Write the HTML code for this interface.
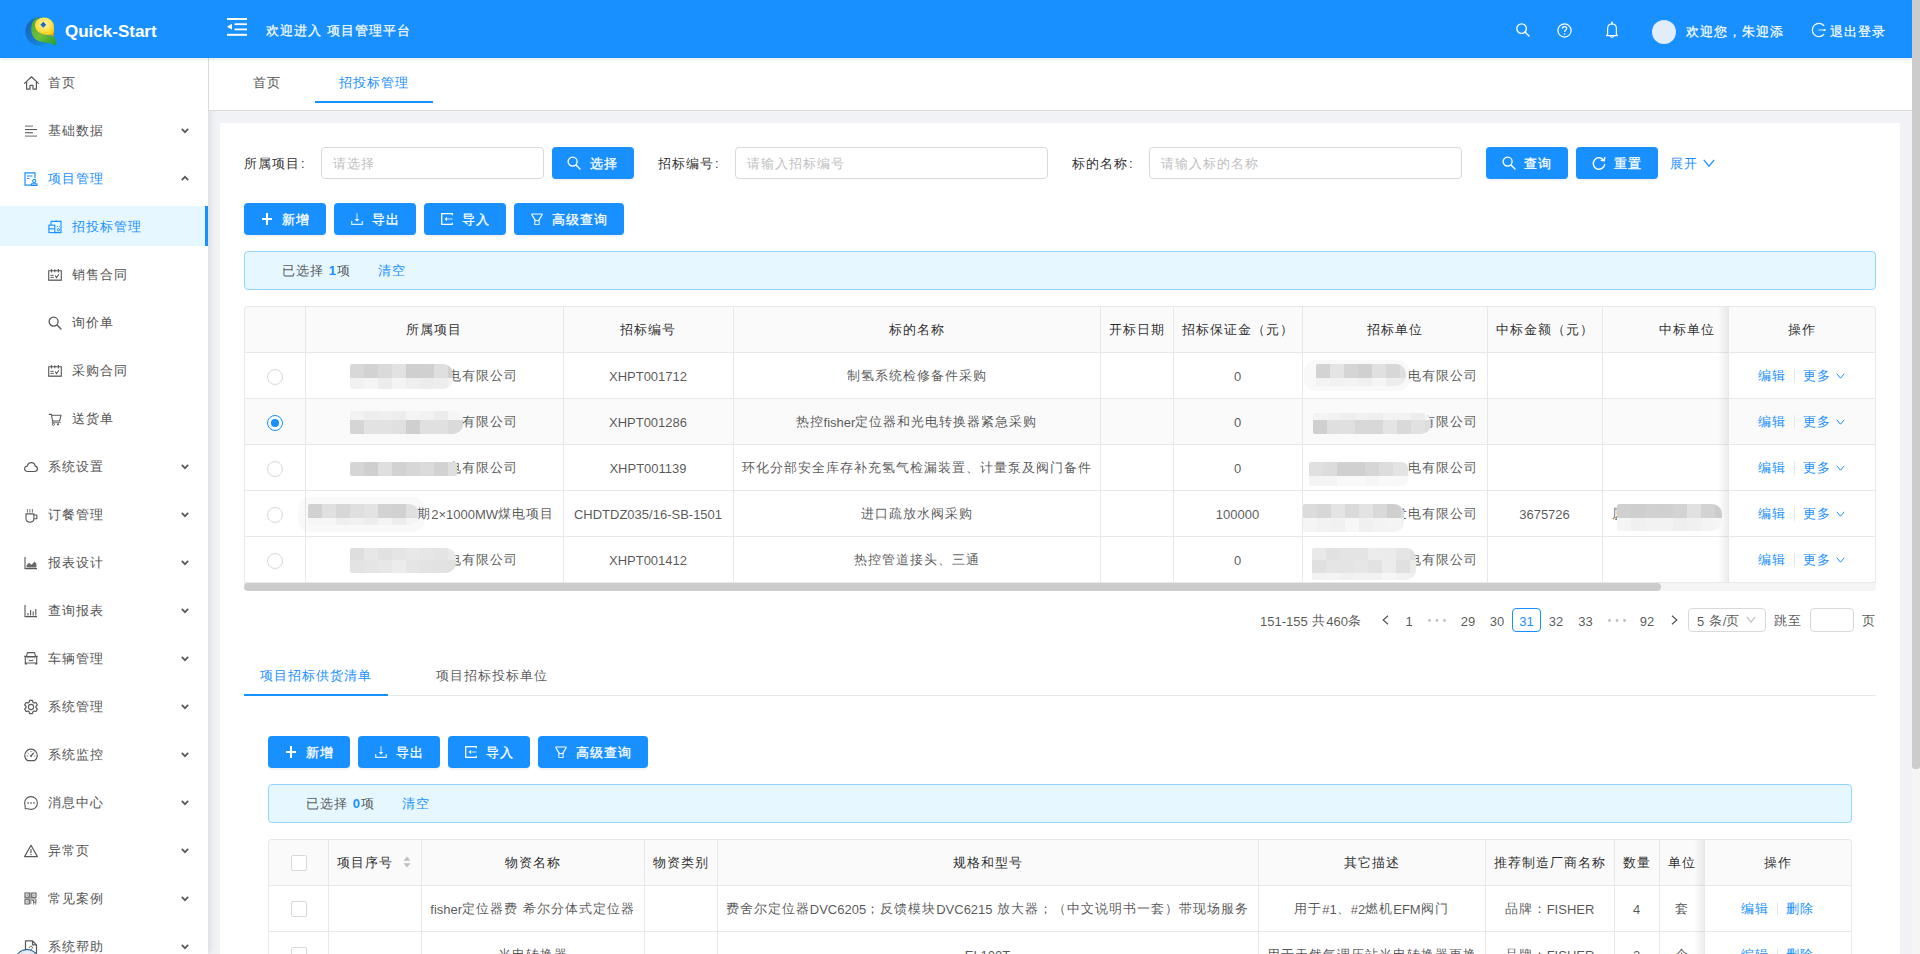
<!DOCTYPE html><html><head><meta charset="utf-8"><style>
*{box-sizing:border-box;margin:0;padding:0}
html,body{width:1920px;height:954px;overflow:hidden;background:#f0f2f5;font-family:"Liberation Sans",sans-serif;font-size:13px;letter-spacing:1px;color:rgba(0,0,0,.68)}
.a{position:absolute}
.t{position:absolute;white-space:nowrap;line-height:20px;height:20px}
svg{position:absolute;overflow:visible}
.d{color:rgba(0,0,0,.85)}
.b{color:#1890ff}
.w{color:#fff}
.l{font-size:13px;letter-spacing:0;vertical-align:-1px}
</style></head><body><div class="a" style="left:220px;top:123px;width:1680px;height:840px;background:#fff"></div>
<div class="t " style="left:244px;top:154px;color:rgba(0,0,0,.85);">所属项目</div>
<div class="t " style="left:301px;top:154px;color:rgba(0,0,0,.85);">:</div>
<div class="a" style="left:321px;top:147px;width:223px;height:32px;background:#fff;border:1px solid #d9d9d9;border-radius:4px"></div>
<div class="t " style="left:333px;top:154px;color:#bfbfbf;">请选择</div>
<div class="a" style="left:552px;top:147px;width:82px;height:32px;background:#1890ff;border-radius:4px;box-shadow:0 2px 0 rgba(0,0,0,.045)"></div>
<svg style="left:567px;top:156px;" width="14" height="14" viewBox="0 0 14 14"><circle cx="5.6" cy="5.6" r="4.5" fill="none" stroke="#fff" stroke-width="1.3"/><path d="M9 9 L13 13" stroke="#fff" stroke-width="1.4" stroke-linecap="round"/></svg>
<div class="t " style="left:590px;top:154px;color:#fff;-webkit-text-stroke:.3px #fff">选择</div>
<div class="t " style="left:658px;top:154px;color:rgba(0,0,0,.85);">招标编号</div>
<div class="t " style="left:715px;top:154px;color:rgba(0,0,0,.85);">:</div>
<div class="a" style="left:735px;top:147px;width:313px;height:32px;background:#fff;border:1px solid #d9d9d9;border-radius:4px"></div>
<div class="t " style="left:747px;top:154px;color:#bfbfbf;">请输入招标编号</div>
<div class="t " style="left:1072px;top:154px;color:rgba(0,0,0,.85);">标的名称</div>
<div class="t " style="left:1129px;top:154px;color:rgba(0,0,0,.85);">:</div>
<div class="a" style="left:1149px;top:147px;width:313px;height:32px;background:#fff;border:1px solid #d9d9d9;border-radius:4px"></div>
<div class="t " style="left:1161px;top:154px;color:#bfbfbf;">请输入标的名称</div>
<div class="a" style="left:1486px;top:147px;width:82px;height:32px;background:#1890ff;border-radius:4px;box-shadow:0 2px 0 rgba(0,0,0,.045)"></div>
<svg style="left:1502px;top:156px;" width="14" height="14" viewBox="0 0 14 14"><circle cx="5.6" cy="5.6" r="4.5" fill="none" stroke="#fff" stroke-width="1.3"/><path d="M9 9 L13 13" stroke="#fff" stroke-width="1.4" stroke-linecap="round"/></svg>
<div class="t " style="left:1524px;top:154px;color:#fff;-webkit-text-stroke:.3px #fff">查询</div>
<div class="a" style="left:1576px;top:147px;width:82px;height:32px;background:#1890ff;border-radius:4px;box-shadow:0 2px 0 rgba(0,0,0,.045)"></div>
<svg style="left:1592px;top:156px;" width="14" height="14" viewBox="0 0 14 14"><path d="M12 4.5 A5.8 5.8 0 1 0 12.8 8" fill="none" stroke="#fff" stroke-width="1.4"/><path d="M12.8 1.2 L12.3 4.8 L8.8 4.3" fill="none" stroke="#fff" stroke-width="1.4"/></svg>
<div class="t " style="left:1614px;top:154px;color:#fff;-webkit-text-stroke:.3px #fff">重置</div>
<div class="t " style="left:1670px;top:154px;color:#1890ff;">展开</div>
<svg style="left:1703px;top:158.5px;" width="12" height="8" viewBox="0 0 12 8"><path d="M0.8 0.8 L6.0 7.2 L11.2 0.8" fill="none" stroke="#1890ff" stroke-width="1.2"/></svg>
<div class="a" style="left:244px;top:203px;width:82px;height:32px;background:#1890ff;border-radius:4px;box-shadow:0 2px 0 rgba(0,0,0,.045)"></div>
<svg style="left:262px;top:213px;" width="10" height="12" viewBox="0 0 10 12"><rect x="4" y="0" width="2" height="12" fill="#fff"/><rect x="0" y="5" width="10" height="2" fill="#fff"/></svg>
<div class="t " style="left:282px;top:210px;color:#fff;-webkit-text-stroke:.3px #fff">新增</div>
<div class="a" style="left:334px;top:203px;width:82px;height:32px;background:#1890ff;border-radius:4px;box-shadow:0 2px 0 rgba(0,0,0,.045)"></div>
<svg style="left:351px;top:213px;" width="12" height="12" viewBox="0 0 12 12"><path d="M6 0.3 L6 7" stroke="#fff" stroke-width="1.1" opacity=".75"/><path d="M3.6 6.2 L6 8.6 L8.4 6.2 Z" fill="#fff"/><path d="M0.7 8 L0.7 11.3 L11.3 11.3 L11.3 8" fill="none" stroke="#fff" stroke-width="1.2" opacity=".85"/></svg>
<div class="t " style="left:372px;top:210px;color:#fff;-webkit-text-stroke:.3px #fff">导出</div>
<div class="a" style="left:424px;top:203px;width:82px;height:32px;background:#1890ff;border-radius:4px;box-shadow:0 2px 0 rgba(0,0,0,.045)"></div>
<svg style="left:441px;top:213px;" width="12" height="12" viewBox="0 0 12 12"><path d="M11.3 2.3 L11.3 0.7 L0.7 0.7 L0.7 11.3 L11.3 11.3 L11.3 9.7" fill="none" stroke="#fff" stroke-width="1.3"/><path d="M5.5 6 L11.5 6" stroke="#fff" stroke-width="1.1" opacity=".75"/><path d="M6 3.7 L3.7 6 L6 8.3 Z" fill="#fff"/></svg>
<div class="t " style="left:462px;top:210px;color:#fff;-webkit-text-stroke:.3px #fff">导入</div>
<div class="a" style="left:514px;top:203px;width:110px;height:32px;background:#1890ff;border-radius:4px;box-shadow:0 2px 0 rgba(0,0,0,.045)"></div>
<svg style="left:531px;top:213px;" width="12" height="12" viewBox="0 0 12 12"><path d="M0.5 1 L11.5 1" stroke="#fff" stroke-width="1.3" opacity=".75"/><path d="M0.6 1.2 L4.4 7.6 M11.4 1.2 L7.6 7.6" stroke="#fff" stroke-width="1.2"/><path d="M4 7.6 L8 7.6" stroke="#fff" stroke-width="1.1"/><path d="M3.8 7.6 L3.8 11.5 L8.2 11.5 L8.2 7.6" fill="none" stroke="#fff" stroke-width="1.2" opacity=".8"/></svg>
<div class="t " style="left:552px;top:210px;color:#fff;-webkit-text-stroke:.3px #fff">高级查询</div>
<div class="a" style="left:244px;top:251px;width:1632px;height:39px;background:#e6f7ff;border:1px solid #91d5ff;border-radius:4px"></div>
<div class="t" style="left:282px;top:261px">已选择 <span class="b" style="font-weight:bold">1</span>项</div>
<div class="t " style="left:378px;top:261px;color:#1890ff;">清空</div>
<div class="a" style="left:244px;top:306px;width:1632px;height:46px;background:#fafafa;border-radius:4px 4px 0 0"></div>
<div class="a" style="left:244px;top:398px;width:1632px;height:46px;background:#fafafa"></div>
<div class="a" style="left:244px;top:306px;width:1632px;height:276px;border:1px solid #e8e8e8;border-bottom:0;border-radius:4px 4px 0 0"></div>
<div class="a" style="left:244px;top:352px;width:1632px;height:1px;background:#e8e8e8"></div>
<div class="a" style="left:244px;top:398px;width:1632px;height:1px;background:#e8e8e8"></div>
<div class="a" style="left:244px;top:444px;width:1632px;height:1px;background:#e8e8e8"></div>
<div class="a" style="left:244px;top:490px;width:1632px;height:1px;background:#e8e8e8"></div>
<div class="a" style="left:244px;top:536px;width:1632px;height:1px;background:#e8e8e8"></div>
<div class="a" style="left:244px;top:582px;width:1632px;height:1px;background:#e8e8e8"></div>
<div class="a" style="left:305px;top:306px;width:1px;height:276px;background:#e8e8e8"></div>
<div class="a" style="left:563px;top:306px;width:1px;height:276px;background:#e8e8e8"></div>
<div class="a" style="left:733px;top:306px;width:1px;height:276px;background:#e8e8e8"></div>
<div class="a" style="left:1100px;top:306px;width:1px;height:276px;background:#e8e8e8"></div>
<div class="a" style="left:1173px;top:306px;width:1px;height:276px;background:#e8e8e8"></div>
<div class="a" style="left:1302px;top:306px;width:1px;height:276px;background:#e8e8e8"></div>
<div class="a" style="left:1487px;top:306px;width:1px;height:276px;background:#e8e8e8"></div>
<div class="a" style="left:1602px;top:306px;width:1px;height:276px;background:#e8e8e8"></div>
<div class="a" style="left:1718px;top:307px;width:10px;height:275px;background:linear-gradient(to right,rgba(0,0,0,0),rgba(0,0,0,.07))"></div>
<div class="a" style="left:1728px;top:307px;width:1px;height:275px;background:#e8e8e8"></div>
<div class="t " style="left:305px;width:258px;top:320px;text-align:center;color:rgba(0,0,0,.85);">所属项目</div>
<div class="t " style="left:563px;width:170px;top:320px;text-align:center;color:rgba(0,0,0,.85);">招标编号</div>
<div class="t " style="left:733px;width:367px;top:320px;text-align:center;color:rgba(0,0,0,.85);">标的名称</div>
<div class="t " style="left:1100px;width:73px;top:320px;text-align:center;color:rgba(0,0,0,.85);">开标日期</div>
<div class="t " style="left:1173px;width:129px;top:320px;text-align:center;color:rgba(0,0,0,.85);">招标保证金（元）</div>
<div class="t " style="left:1302px;width:185px;top:320px;text-align:center;color:rgba(0,0,0,.85);">招标单位</div>
<div class="t " style="left:1487px;width:115px;top:320px;text-align:center;color:rgba(0,0,0,.85);">中标金额（元）</div>
<div class="t " style="left:1602px;width:170px;top:320px;text-align:center;color:rgba(0,0,0,.85);">中标单位</div>
<div class="t " style="left:1728px;width:148px;top:320px;text-align:center;color:rgba(0,0,0,.85);">操作</div>
<div class="a" style="left:267px;top:369px;width:16px;height:16px;border:1px solid #d9d9d9;border-radius:50%;background:#fff"></div>
<div class="t" style="left:300px;width:218px;top:366px;text-align:right">电有限公司</div>
<div class="t " style="left:563px;width:170px;top:366px;text-align:center;"><span class="l">XHPT001712</span></div>
<div class="t " style="left:733px;width:367px;top:366px;text-align:center;">制氢系统检修备件采购</div>
<div class="t " style="left:1173px;width:129px;top:366px;text-align:center;"><span class="l">0</span></div>
<div class="t" style="left:1300px;width:178px;top:366px;text-align:right">电有限公司</div>
<div class="t " style="left:1758px;top:366px;color:#1890ff;">编辑</div>
<div class="a" style="left:1794px;top:369px;width:1px;height:14px;background:#e8e8e8"></div>
<div class="t " style="left:1803px;top:366px;color:#1890ff;">更多</div>
<svg style="left:1836px;top:373.0px;" width="9" height="6" viewBox="0 0 9 6"><path d="M0.8 0.8 L4.5 5.2 L8.2 0.8" fill="none" stroke="#1890ff" stroke-width="1.0"/></svg>
<div class="a" style="left:267px;top:415px;width:16px;height:16px;border:1px solid #1890ff;border-radius:50%;background:#fff"></div>
<div class="a" style="left:271px;top:419px;width:8px;height:8px;background:#1890ff;border-radius:50%"></div>
<div class="t" style="left:300px;width:218px;top:412px;text-align:right">有限公司</div>
<div class="t " style="left:563px;width:170px;top:412px;text-align:center;"><span class="l">XHPT001286</span></div>
<div class="t " style="left:733px;width:367px;top:412px;text-align:center;">热控<span class="l">fisher</span>定位器和光电转换器紧急采购</div>
<div class="t " style="left:1173px;width:129px;top:412px;text-align:center;"><span class="l">0</span></div>
<div class="t" style="left:1300px;width:178px;top:412px;text-align:right">有限公司</div>
<div class="t " style="left:1758px;top:412px;color:#1890ff;">编辑</div>
<div class="a" style="left:1794px;top:415px;width:1px;height:14px;background:#e8e8e8"></div>
<div class="t " style="left:1803px;top:412px;color:#1890ff;">更多</div>
<svg style="left:1836px;top:419.0px;" width="9" height="6" viewBox="0 0 9 6"><path d="M0.8 0.8 L4.5 5.2 L8.2 0.8" fill="none" stroke="#1890ff" stroke-width="1.0"/></svg>
<div class="a" style="left:267px;top:461px;width:16px;height:16px;border:1px solid #d9d9d9;border-radius:50%;background:#fff"></div>
<div class="t" style="left:300px;width:218px;top:458px;text-align:right">电有限公司</div>
<div class="t " style="left:563px;width:170px;top:458px;text-align:center;"><span class="l">XHPT001139</span></div>
<div class="t " style="left:733px;width:367px;top:458px;text-align:center;">环化分部安全库存补充氢气检漏装置、计量泵及阀门备件</div>
<div class="t " style="left:1173px;width:129px;top:458px;text-align:center;"><span class="l">0</span></div>
<div class="t" style="left:1300px;width:178px;top:458px;text-align:right">电有限公司</div>
<div class="t " style="left:1758px;top:458px;color:#1890ff;">编辑</div>
<div class="a" style="left:1794px;top:461px;width:1px;height:14px;background:#e8e8e8"></div>
<div class="t " style="left:1803px;top:458px;color:#1890ff;">更多</div>
<svg style="left:1836px;top:465.0px;" width="9" height="6" viewBox="0 0 9 6"><path d="M0.8 0.8 L4.5 5.2 L8.2 0.8" fill="none" stroke="#1890ff" stroke-width="1.0"/></svg>
<div class="a" style="left:267px;top:507px;width:16px;height:16px;border:1px solid #d9d9d9;border-radius:50%;background:#fff"></div>
<div class="t" style="left:300px;width:254px;top:504px;text-align:right">期<span class="l">2×1000MW</span>煤电项目</div>
<div class="t " style="left:563px;width:170px;top:504px;text-align:center;"><span class="l">CHDTDZ035/16-SB-1501</span></div>
<div class="t " style="left:733px;width:367px;top:504px;text-align:center;">进口疏放水阀采购</div>
<div class="t " style="left:1173px;width:129px;top:504px;text-align:center;"><span class="l">100000</span></div>
<div class="t" style="left:1300px;width:178px;top:504px;text-align:right">发电有限公司</div>
<div class="t " style="left:1487px;width:115px;top:504px;text-align:center;"><span class="l">3675726</span></div>
<div class="t " style="left:1612px;top:504px;">厦</div>
<div class="t " style="left:1758px;top:504px;color:#1890ff;">编辑</div>
<div class="a" style="left:1794px;top:507px;width:1px;height:14px;background:#e8e8e8"></div>
<div class="t " style="left:1803px;top:504px;color:#1890ff;">更多</div>
<svg style="left:1836px;top:511.0px;" width="9" height="6" viewBox="0 0 9 6"><path d="M0.8 0.8 L4.5 5.2 L8.2 0.8" fill="none" stroke="#1890ff" stroke-width="1.0"/></svg>
<div class="a" style="left:267px;top:553px;width:16px;height:16px;border:1px solid #d9d9d9;border-radius:50%;background:#fff"></div>
<div class="t" style="left:300px;width:218px;top:550px;text-align:right">电有限公司</div>
<div class="t " style="left:563px;width:170px;top:550px;text-align:center;"><span class="l">XHPT001412</span></div>
<div class="t " style="left:733px;width:367px;top:550px;text-align:center;">热控管道接头、三通</div>
<div class="t " style="left:1173px;width:129px;top:550px;text-align:center;"><span class="l">0</span></div>
<div class="t" style="left:1300px;width:178px;top:550px;text-align:right">电有限公司</div>
<div class="t " style="left:1758px;top:550px;color:#1890ff;">编辑</div>
<div class="a" style="left:1794px;top:553px;width:1px;height:14px;background:#e8e8e8"></div>
<div class="t " style="left:1803px;top:550px;color:#1890ff;">更多</div>
<svg style="left:1836px;top:557.0px;" width="9" height="6" viewBox="0 0 9 6"><path d="M0.8 0.8 L4.5 5.2 L8.2 0.8" fill="none" stroke="#1890ff" stroke-width="1.0"/></svg>
<div class="a" style="left:350px;top:364px;width:103px;height:25px;overflow:hidden;border-radius:2px 10px 10px 2px"><div style="position:absolute;left:0px;top:0px;width:14px;height:14px;background:rgb(216,216,216)"></div><div style="position:absolute;left:14px;top:0px;width:14px;height:14px;background:rgb(210,210,210)"></div><div style="position:absolute;left:28px;top:0px;width:14px;height:14px;background:rgb(218,218,218)"></div><div style="position:absolute;left:42px;top:0px;width:14px;height:14px;background:rgb(226,226,226)"></div><div style="position:absolute;left:56px;top:0px;width:14px;height:14px;background:rgb(207,207,207)"></div><div style="position:absolute;left:70px;top:0px;width:14px;height:14px;background:rgb(208,208,208)"></div><div style="position:absolute;left:84px;top:0px;width:14px;height:14px;background:rgb(223,223,223)"></div><div style="position:absolute;left:98px;top:0px;width:5px;height:14px;background:rgb(209,209,209)"></div><div style="position:absolute;left:0px;top:14px;width:14px;height:11px;background:rgb(241,241,241)"></div><div style="position:absolute;left:14px;top:14px;width:14px;height:11px;background:rgb(245,245,245)"></div><div style="position:absolute;left:28px;top:14px;width:14px;height:11px;background:rgb(236,236,236)"></div><div style="position:absolute;left:42px;top:14px;width:14px;height:11px;background:rgb(244,244,244)"></div><div style="position:absolute;left:56px;top:14px;width:14px;height:11px;background:rgb(239,239,239)"></div><div style="position:absolute;left:70px;top:14px;width:14px;height:11px;background:rgb(236,236,236)"></div><div style="position:absolute;left:84px;top:14px;width:14px;height:11px;background:rgb(237,237,237)"></div><div style="position:absolute;left:98px;top:14px;width:5px;height:11px;background:rgb(242,242,242)"></div></div>
<div class="a" style="left:350px;top:411px;width:113px;height:23px;overflow:hidden;border-radius:2px 10px 10px 2px"><div style="position:absolute;left:0px;top:0px;width:14px;height:9px;background:rgb(242,242,242)"></div><div style="position:absolute;left:14px;top:0px;width:14px;height:9px;background:rgb(237,237,237)"></div><div style="position:absolute;left:28px;top:0px;width:14px;height:9px;background:rgb(239,239,239)"></div><div style="position:absolute;left:42px;top:0px;width:14px;height:9px;background:rgb(237,237,237)"></div><div style="position:absolute;left:56px;top:0px;width:14px;height:9px;background:rgb(244,244,244)"></div><div style="position:absolute;left:70px;top:0px;width:14px;height:9px;background:rgb(242,242,242)"></div><div style="position:absolute;left:84px;top:0px;width:14px;height:9px;background:rgb(236,236,236)"></div><div style="position:absolute;left:98px;top:0px;width:14px;height:9px;background:rgb(245,245,245)"></div><div style="position:absolute;left:112px;top:0px;width:1px;height:9px;background:rgb(237,237,237)"></div><div style="position:absolute;left:0px;top:9px;width:14px;height:14px;background:rgb(213,213,213)"></div><div style="position:absolute;left:14px;top:9px;width:14px;height:14px;background:rgb(226,226,226)"></div><div style="position:absolute;left:28px;top:9px;width:14px;height:14px;background:rgb(226,226,226)"></div><div style="position:absolute;left:42px;top:9px;width:14px;height:14px;background:rgb(224,224,224)"></div><div style="position:absolute;left:56px;top:9px;width:14px;height:14px;background:rgb(207,207,207)"></div><div style="position:absolute;left:70px;top:9px;width:14px;height:14px;background:rgb(224,224,224)"></div><div style="position:absolute;left:84px;top:9px;width:14px;height:14px;background:rgb(224,224,224)"></div><div style="position:absolute;left:98px;top:9px;width:14px;height:14px;background:rgb(218,218,218)"></div><div style="position:absolute;left:112px;top:9px;width:1px;height:14px;background:rgb(207,207,207)"></div></div>
<div class="a" style="left:350px;top:462px;width:107px;height:14px;overflow:hidden;border-radius:2px 2px 2px 2px"><div style="position:absolute;left:0px;top:0px;width:14px;height:14px;background:rgb(213,213,213)"></div><div style="position:absolute;left:14px;top:0px;width:14px;height:14px;background:rgb(207,207,207)"></div><div style="position:absolute;left:28px;top:0px;width:14px;height:14px;background:rgb(223,223,223)"></div><div style="position:absolute;left:42px;top:0px;width:14px;height:14px;background:rgb(210,210,210)"></div><div style="position:absolute;left:56px;top:0px;width:14px;height:14px;background:rgb(215,215,215)"></div><div style="position:absolute;left:70px;top:0px;width:14px;height:14px;background:rgb(219,219,219)"></div><div style="position:absolute;left:84px;top:0px;width:14px;height:14px;background:rgb(210,210,210)"></div><div style="position:absolute;left:98px;top:0px;width:9px;height:14px;background:rgb(223,223,223)"></div></div>
<div class="a" style="left:298px;top:497px;width:127px;height:35px;background:rgba(0,0,0,.025);border-radius:12px"></div>
<div class="a" style="left:308px;top:504px;width:111px;height:21px;overflow:hidden;border-radius:2px 10px 10px 2px"><div style="position:absolute;left:0px;top:0px;width:14px;height:14px;background:rgb(209,209,209)"></div><div style="position:absolute;left:14px;top:0px;width:14px;height:14px;background:rgb(224,224,224)"></div><div style="position:absolute;left:28px;top:0px;width:14px;height:14px;background:rgb(215,215,215)"></div><div style="position:absolute;left:42px;top:0px;width:14px;height:14px;background:rgb(223,223,223)"></div><div style="position:absolute;left:56px;top:0px;width:14px;height:14px;background:rgb(227,227,227)"></div><div style="position:absolute;left:70px;top:0px;width:14px;height:14px;background:rgb(211,211,211)"></div><div style="position:absolute;left:84px;top:0px;width:14px;height:14px;background:rgb(209,209,209)"></div><div style="position:absolute;left:98px;top:0px;width:13px;height:14px;background:rgb(224,224,224)"></div><div style="position:absolute;left:0px;top:14px;width:14px;height:7px;background:rgb(245,245,245)"></div><div style="position:absolute;left:14px;top:14px;width:14px;height:7px;background:rgb(246,246,246)"></div><div style="position:absolute;left:28px;top:14px;width:14px;height:7px;background:rgb(239,239,239)"></div><div style="position:absolute;left:42px;top:14px;width:14px;height:7px;background:rgb(241,241,241)"></div><div style="position:absolute;left:56px;top:14px;width:14px;height:7px;background:rgb(237,237,237)"></div><div style="position:absolute;left:70px;top:14px;width:14px;height:7px;background:rgb(244,244,244)"></div><div style="position:absolute;left:84px;top:14px;width:14px;height:7px;background:rgb(237,237,237)"></div><div style="position:absolute;left:98px;top:14px;width:13px;height:7px;background:rgb(245,245,245)"></div></div>
<div class="a" style="left:350px;top:548px;width:106px;height:25px;overflow:hidden;border-radius:2px 10px 10px 2px"><div style="position:absolute;left:0px;top:0px;width:14px;height:12px;background:rgb(222,222,222)"></div><div style="position:absolute;left:14px;top:0px;width:14px;height:12px;background:rgb(231,231,231)"></div><div style="position:absolute;left:28px;top:0px;width:14px;height:12px;background:rgb(225,225,225)"></div><div style="position:absolute;left:42px;top:0px;width:14px;height:12px;background:rgb(229,229,229)"></div><div style="position:absolute;left:56px;top:0px;width:14px;height:12px;background:rgb(232,232,232)"></div><div style="position:absolute;left:70px;top:0px;width:14px;height:12px;background:rgb(230,230,230)"></div><div style="position:absolute;left:84px;top:0px;width:14px;height:12px;background:rgb(228,228,228)"></div><div style="position:absolute;left:98px;top:0px;width:8px;height:12px;background:rgb(234,234,234)"></div><div style="position:absolute;left:0px;top:12px;width:14px;height:13px;background:rgb(227,227,227)"></div><div style="position:absolute;left:14px;top:12px;width:14px;height:13px;background:rgb(229,229,229)"></div><div style="position:absolute;left:28px;top:12px;width:14px;height:13px;background:rgb(231,231,231)"></div><div style="position:absolute;left:42px;top:12px;width:14px;height:13px;background:rgb(236,236,236)"></div><div style="position:absolute;left:56px;top:12px;width:14px;height:13px;background:rgb(229,229,229)"></div><div style="position:absolute;left:70px;top:12px;width:14px;height:13px;background:rgb(227,227,227)"></div><div style="position:absolute;left:84px;top:12px;width:14px;height:13px;background:rgb(226,226,226)"></div><div style="position:absolute;left:98px;top:12px;width:8px;height:13px;background:rgb(225,225,225)"></div></div>
<div class="a" style="left:1304px;top:360px;width:106px;height:31px;background:rgba(0,0,0,.025);border-radius:12px"></div>
<div class="a" style="left:1316px;top:364px;width:90px;height:22px;overflow:hidden;border-radius:2px 10px 10px 2px"><div style="position:absolute;left:0px;top:0px;width:14px;height:14px;background:rgb(211,211,211)"></div><div style="position:absolute;left:14px;top:0px;width:14px;height:14px;background:rgb(228,228,228)"></div><div style="position:absolute;left:28px;top:0px;width:14px;height:14px;background:rgb(213,213,213)"></div><div style="position:absolute;left:42px;top:0px;width:14px;height:14px;background:rgb(208,208,208)"></div><div style="position:absolute;left:56px;top:0px;width:14px;height:14px;background:rgb(224,224,224)"></div><div style="position:absolute;left:70px;top:0px;width:14px;height:14px;background:rgb(215,215,215)"></div><div style="position:absolute;left:84px;top:0px;width:6px;height:14px;background:rgb(222,222,222)"></div><div style="position:absolute;left:0px;top:14px;width:14px;height:8px;background:rgb(243,243,243)"></div><div style="position:absolute;left:14px;top:14px;width:14px;height:8px;background:rgb(241,241,241)"></div><div style="position:absolute;left:28px;top:14px;width:14px;height:8px;background:rgb(243,243,243)"></div><div style="position:absolute;left:42px;top:14px;width:14px;height:8px;background:rgb(240,240,240)"></div><div style="position:absolute;left:56px;top:14px;width:14px;height:8px;background:rgb(245,245,245)"></div><div style="position:absolute;left:70px;top:14px;width:14px;height:8px;background:rgb(237,237,237)"></div><div style="position:absolute;left:84px;top:14px;width:6px;height:8px;background:rgb(237,237,237)"></div></div>
<div class="a" style="left:1313px;top:413px;width:118px;height:21px;overflow:hidden;border-radius:2px 10px 10px 2px"><div style="position:absolute;left:0px;top:0px;width:14px;height:7px;background:rgb(244,244,244)"></div><div style="position:absolute;left:14px;top:0px;width:14px;height:7px;background:rgb(242,242,242)"></div><div style="position:absolute;left:28px;top:0px;width:14px;height:7px;background:rgb(238,238,238)"></div><div style="position:absolute;left:42px;top:0px;width:14px;height:7px;background:rgb(241,241,241)"></div><div style="position:absolute;left:56px;top:0px;width:14px;height:7px;background:rgb(238,238,238)"></div><div style="position:absolute;left:70px;top:0px;width:14px;height:7px;background:rgb(243,243,243)"></div><div style="position:absolute;left:84px;top:0px;width:14px;height:7px;background:rgb(242,242,242)"></div><div style="position:absolute;left:98px;top:0px;width:14px;height:7px;background:rgb(236,236,236)"></div><div style="position:absolute;left:112px;top:0px;width:6px;height:7px;background:rgb(246,246,246)"></div><div style="position:absolute;left:0px;top:7px;width:14px;height:14px;background:rgb(208,208,208)"></div><div style="position:absolute;left:14px;top:7px;width:14px;height:14px;background:rgb(223,223,223)"></div><div style="position:absolute;left:28px;top:7px;width:14px;height:14px;background:rgb(224,224,224)"></div><div style="position:absolute;left:42px;top:7px;width:14px;height:14px;background:rgb(216,216,216)"></div><div style="position:absolute;left:56px;top:7px;width:14px;height:14px;background:rgb(216,216,216)"></div><div style="position:absolute;left:70px;top:7px;width:14px;height:14px;background:rgb(228,228,228)"></div><div style="position:absolute;left:84px;top:7px;width:14px;height:14px;background:rgb(217,217,217)"></div><div style="position:absolute;left:98px;top:7px;width:14px;height:14px;background:rgb(225,225,225)"></div><div style="position:absolute;left:112px;top:7px;width:6px;height:14px;background:rgb(221,221,221)"></div></div>
<div class="a" style="left:1309px;top:462px;width:99px;height:24px;overflow:hidden;border-radius:2px 6px 6px 2px"><div style="position:absolute;left:0px;top:0px;width:14px;height:14px;background:rgb(224,224,224)"></div><div style="position:absolute;left:14px;top:0px;width:14px;height:14px;background:rgb(220,220,220)"></div><div style="position:absolute;left:28px;top:0px;width:14px;height:14px;background:rgb(208,208,208)"></div><div style="position:absolute;left:42px;top:0px;width:14px;height:14px;background:rgb(208,208,208)"></div><div style="position:absolute;left:56px;top:0px;width:14px;height:14px;background:rgb(214,214,214)"></div><div style="position:absolute;left:70px;top:0px;width:14px;height:14px;background:rgb(221,221,221)"></div><div style="position:absolute;left:84px;top:0px;width:14px;height:14px;background:rgb(228,228,228)"></div><div style="position:absolute;left:98px;top:0px;width:1px;height:14px;background:rgb(227,227,227)"></div><div style="position:absolute;left:0px;top:14px;width:14px;height:10px;background:rgb(244,244,244)"></div><div style="position:absolute;left:14px;top:14px;width:14px;height:10px;background:rgb(244,244,244)"></div><div style="position:absolute;left:28px;top:14px;width:14px;height:10px;background:rgb(249,249,249)"></div><div style="position:absolute;left:42px;top:14px;width:14px;height:10px;background:rgb(249,249,249)"></div><div style="position:absolute;left:56px;top:14px;width:14px;height:10px;background:rgb(246,246,246)"></div><div style="position:absolute;left:70px;top:14px;width:14px;height:10px;background:rgb(249,249,249)"></div><div style="position:absolute;left:84px;top:14px;width:14px;height:10px;background:rgb(248,248,248)"></div><div style="position:absolute;left:98px;top:14px;width:1px;height:10px;background:rgb(249,249,249)"></div></div>
<div class="a" style="left:1303px;top:504px;width:101px;height:28px;overflow:hidden;border-radius:2px 10px 10px 2px"><div style="position:absolute;left:0px;top:0px;width:14px;height:14px;background:rgb(220,220,220)"></div><div style="position:absolute;left:14px;top:0px;width:14px;height:14px;background:rgb(215,215,215)"></div><div style="position:absolute;left:28px;top:0px;width:14px;height:14px;background:rgb(228,228,228)"></div><div style="position:absolute;left:42px;top:0px;width:14px;height:14px;background:rgb(218,218,218)"></div><div style="position:absolute;left:56px;top:0px;width:14px;height:14px;background:rgb(227,227,227)"></div><div style="position:absolute;left:70px;top:0px;width:14px;height:14px;background:rgb(217,217,217)"></div><div style="position:absolute;left:84px;top:0px;width:14px;height:14px;background:rgb(206,206,206)"></div><div style="position:absolute;left:98px;top:0px;width:3px;height:14px;background:rgb(220,220,220)"></div><div style="position:absolute;left:0px;top:14px;width:14px;height:14px;background:rgb(245,245,245)"></div><div style="position:absolute;left:14px;top:14px;width:14px;height:14px;background:rgb(242,242,242)"></div><div style="position:absolute;left:28px;top:14px;width:14px;height:14px;background:rgb(241,241,241)"></div><div style="position:absolute;left:42px;top:14px;width:14px;height:14px;background:rgb(247,247,247)"></div><div style="position:absolute;left:56px;top:14px;width:14px;height:14px;background:rgb(240,240,240)"></div><div style="position:absolute;left:70px;top:14px;width:14px;height:14px;background:rgb(243,243,243)"></div><div style="position:absolute;left:84px;top:14px;width:14px;height:14px;background:rgb(244,244,244)"></div><div style="position:absolute;left:98px;top:14px;width:3px;height:14px;background:rgb(242,242,242)"></div></div>
<div class="a" style="left:1312px;top:548px;width:104px;height:32px;overflow:hidden;border-radius:2px 10px 10px 2px"><div style="position:absolute;left:0px;top:0px;width:14px;height:12px;background:rgb(233,233,233)"></div><div style="position:absolute;left:14px;top:0px;width:14px;height:12px;background:rgb(225,225,225)"></div><div style="position:absolute;left:28px;top:0px;width:14px;height:12px;background:rgb(228,228,228)"></div><div style="position:absolute;left:42px;top:0px;width:14px;height:12px;background:rgb(228,228,228)"></div><div style="position:absolute;left:56px;top:0px;width:14px;height:12px;background:rgb(236,236,236)"></div><div style="position:absolute;left:70px;top:0px;width:14px;height:12px;background:rgb(235,235,235)"></div><div style="position:absolute;left:84px;top:0px;width:14px;height:12px;background:rgb(229,229,229)"></div><div style="position:absolute;left:98px;top:0px;width:6px;height:12px;background:rgb(223,223,223)"></div><div style="position:absolute;left:0px;top:12px;width:14px;height:13px;background:rgb(224,224,224)"></div><div style="position:absolute;left:14px;top:12px;width:14px;height:13px;background:rgb(229,229,229)"></div><div style="position:absolute;left:28px;top:12px;width:14px;height:13px;background:rgb(228,228,228)"></div><div style="position:absolute;left:42px;top:12px;width:14px;height:13px;background:rgb(230,230,230)"></div><div style="position:absolute;left:56px;top:12px;width:14px;height:13px;background:rgb(226,226,226)"></div><div style="position:absolute;left:70px;top:12px;width:14px;height:13px;background:rgb(236,236,236)"></div><div style="position:absolute;left:84px;top:12px;width:14px;height:13px;background:rgb(224,224,224)"></div><div style="position:absolute;left:98px;top:12px;width:6px;height:13px;background:rgb(235,235,235)"></div><div style="position:absolute;left:0px;top:25px;width:14px;height:7px;background:rgb(242,242,242)"></div><div style="position:absolute;left:14px;top:25px;width:14px;height:7px;background:rgb(244,244,244)"></div><div style="position:absolute;left:28px;top:25px;width:14px;height:7px;background:rgb(240,240,240)"></div><div style="position:absolute;left:42px;top:25px;width:14px;height:7px;background:rgb(242,242,242)"></div><div style="position:absolute;left:56px;top:25px;width:14px;height:7px;background:rgb(241,241,241)"></div><div style="position:absolute;left:70px;top:25px;width:14px;height:7px;background:rgb(246,246,246)"></div><div style="position:absolute;left:84px;top:25px;width:14px;height:7px;background:rgb(242,242,242)"></div><div style="position:absolute;left:98px;top:25px;width:6px;height:7px;background:rgb(239,239,239)"></div></div>
<div class="a" style="left:1617px;top:504px;width:105px;height:27px;overflow:hidden;border-radius:2px 10px 10px 2px"><div style="position:absolute;left:0px;top:0px;width:14px;height:14px;background:rgb(208,208,208)"></div><div style="position:absolute;left:14px;top:0px;width:14px;height:14px;background:rgb(206,206,206)"></div><div style="position:absolute;left:28px;top:0px;width:14px;height:14px;background:rgb(209,209,209)"></div><div style="position:absolute;left:42px;top:0px;width:14px;height:14px;background:rgb(208,208,208)"></div><div style="position:absolute;left:56px;top:0px;width:14px;height:14px;background:rgb(211,211,211)"></div><div style="position:absolute;left:70px;top:0px;width:14px;height:14px;background:rgb(225,225,225)"></div><div style="position:absolute;left:84px;top:0px;width:14px;height:14px;background:rgb(211,211,211)"></div><div style="position:absolute;left:98px;top:0px;width:7px;height:14px;background:rgb(204,204,204)"></div><div style="position:absolute;left:0px;top:14px;width:14px;height:13px;background:rgb(245,245,245)"></div><div style="position:absolute;left:14px;top:14px;width:14px;height:13px;background:rgb(240,240,240)"></div><div style="position:absolute;left:28px;top:14px;width:14px;height:13px;background:rgb(242,242,242)"></div><div style="position:absolute;left:42px;top:14px;width:14px;height:13px;background:rgb(242,242,242)"></div><div style="position:absolute;left:56px;top:14px;width:14px;height:13px;background:rgb(238,238,238)"></div><div style="position:absolute;left:70px;top:14px;width:14px;height:13px;background:rgb(240,240,240)"></div><div style="position:absolute;left:84px;top:14px;width:14px;height:13px;background:rgb(244,244,244)"></div><div style="position:absolute;left:98px;top:14px;width:7px;height:13px;background:rgb(246,246,246)"></div></div>
<div class="a" style="left:244px;top:582px;width:1632px;height:1px;background:#e8e8e8"></div>
<div class="a" style="left:244px;top:583px;width:1632px;height:8px;background:#f5f5f5;border-radius:0 0 4px 4px"></div>
<div class="a" style="left:244px;top:583px;width:1417px;height:8px;background:#cccccc;border-radius:4px"></div>
<div class="t " style="left:1260px;top:611px;"><span class="l">151-155</span> 共<span class="l">460</span>条</div>
<svg style="left:1382px;top:615px;" width="7" height="10" viewBox="0 0 7 10"><path d="M6 0.8 L1.2 5 L6 9.2" fill="none" stroke="#545454" stroke-width="1.2"/></svg>
<div class="t " style="left:1396px;width:26px;top:611px;text-align:center;"><span class="l">1</span></div>
<svg style="left:1428px;top:618.5px;" width="18" height="3" viewBox="0 0 18 3"><circle cx="1.5" cy="1.5" r="1.4" fill="#bfbfbf"/><circle cx="9" cy="1.5" r="1.4" fill="#bfbfbf"/><circle cx="16.5" cy="1.5" r="1.4" fill="#bfbfbf"/></svg>
<div class="t " style="left:1454px;width:28px;top:611px;text-align:center;"><span class="l">29</span></div>
<div class="t " style="left:1483px;width:28px;top:611px;text-align:center;"><span class="l">30</span></div>
<div class="a" style="left:1512px;top:608px;width:29px;height:24px;border:1px solid #1890ff;border-radius:4px"></div>
<div class="t " style="left:1512px;width:29px;top:611px;text-align:center;color:#1890ff;"><span class="l">31</span></div>
<div class="t " style="left:1542px;width:28px;top:611px;text-align:center;"><span class="l">32</span></div>
<div class="t " style="left:1571px;width:29px;top:611px;text-align:center;"><span class="l">33</span></div>
<svg style="left:1608px;top:618.5px;" width="18" height="3" viewBox="0 0 18 3"><circle cx="1.5" cy="1.5" r="1.4" fill="#bfbfbf"/><circle cx="9" cy="1.5" r="1.4" fill="#bfbfbf"/><circle cx="16.5" cy="1.5" r="1.4" fill="#bfbfbf"/></svg>
<div class="t " style="left:1633px;width:28px;top:611px;text-align:center;"><span class="l">92</span></div>
<svg style="left:1671px;top:615px;" width="7" height="10" viewBox="0 0 7 10"><path d="M1 0.8 L5.8 5 L1 9.2" fill="none" stroke="#545454" stroke-width="1.2"/></svg>
<div class="a" style="left:1688px;top:608px;width:78px;height:24px;border:1px solid #d9d9d9;border-radius:4px"></div>
<div class="t " style="left:1697px;top:611px;"><span class="l">5</span> 条<span class="l">/</span>页</div>
<svg style="left:1746px;top:616.0px;" width="10" height="7" viewBox="0 0 10 7"><path d="M0.8 0.8 L5.0 6.2 L9.2 0.8" fill="none" stroke="#bfbfbf" stroke-width="1.1"/></svg>
<div class="t " style="left:1774px;top:611px;">跳至</div>
<div class="a" style="left:1810px;top:608px;width:44px;height:24px;border:1px solid #d9d9d9;border-radius:4px"></div>
<div class="t " style="left:1862px;top:611px;">页</div>
<div class="a" style="left:244px;top:695px;width:1632px;height:1px;background:#e8e8e8"></div>
<div class="t " style="left:260px;top:666px;color:#1890ff;">项目招标供货清单</div>
<div class="t " style="left:436px;top:666px;">项目招标投标单位</div>
<div class="a" style="left:244px;top:694px;width:144px;height:2px;background:#1890ff"></div>
<div class="a" style="left:268px;top:736px;width:82px;height:32px;background:#1890ff;border-radius:4px;box-shadow:0 2px 0 rgba(0,0,0,.045)"></div>
<svg style="left:286px;top:746px;" width="10" height="12" viewBox="0 0 10 12"><rect x="4" y="0" width="2" height="12" fill="#fff"/><rect x="0" y="5" width="10" height="2" fill="#fff"/></svg>
<div class="t " style="left:306px;top:743px;color:#fff;-webkit-text-stroke:.3px #fff">新增</div>
<div class="a" style="left:358px;top:736px;width:82px;height:32px;background:#1890ff;border-radius:4px;box-shadow:0 2px 0 rgba(0,0,0,.045)"></div>
<svg style="left:375px;top:746px;" width="12" height="12" viewBox="0 0 12 12"><path d="M6 0.3 L6 7" stroke="#fff" stroke-width="1.1" opacity=".75"/><path d="M3.6 6.2 L6 8.6 L8.4 6.2 Z" fill="#fff"/><path d="M0.7 8 L0.7 11.3 L11.3 11.3 L11.3 8" fill="none" stroke="#fff" stroke-width="1.2" opacity=".85"/></svg>
<div class="t " style="left:396px;top:743px;color:#fff;-webkit-text-stroke:.3px #fff">导出</div>
<div class="a" style="left:448px;top:736px;width:82px;height:32px;background:#1890ff;border-radius:4px;box-shadow:0 2px 0 rgba(0,0,0,.045)"></div>
<svg style="left:465px;top:746px;" width="12" height="12" viewBox="0 0 12 12"><path d="M11.3 2.3 L11.3 0.7 L0.7 0.7 L0.7 11.3 L11.3 11.3 L11.3 9.7" fill="none" stroke="#fff" stroke-width="1.3"/><path d="M5.5 6 L11.5 6" stroke="#fff" stroke-width="1.1" opacity=".75"/><path d="M6 3.7 L3.7 6 L6 8.3 Z" fill="#fff"/></svg>
<div class="t " style="left:486px;top:743px;color:#fff;-webkit-text-stroke:.3px #fff">导入</div>
<div class="a" style="left:538px;top:736px;width:110px;height:32px;background:#1890ff;border-radius:4px;box-shadow:0 2px 0 rgba(0,0,0,.045)"></div>
<svg style="left:555px;top:746px;" width="12" height="12" viewBox="0 0 12 12"><path d="M0.5 1 L11.5 1" stroke="#fff" stroke-width="1.3" opacity=".75"/><path d="M0.6 1.2 L4.4 7.6 M11.4 1.2 L7.6 7.6" stroke="#fff" stroke-width="1.2"/><path d="M4 7.6 L8 7.6" stroke="#fff" stroke-width="1.1"/><path d="M3.8 7.6 L3.8 11.5 L8.2 11.5 L8.2 7.6" fill="none" stroke="#fff" stroke-width="1.2" opacity=".8"/></svg>
<div class="t " style="left:576px;top:743px;color:#fff;-webkit-text-stroke:.3px #fff">高级查询</div>
<div class="a" style="left:268px;top:784px;width:1584px;height:39px;background:#e6f7ff;border:1px solid #91d5ff;border-radius:4px"></div>
<div class="t" style="left:306px;top:794px">已选择 <span class="b" style="font-weight:bold">0</span>项</div>
<div class="t " style="left:402px;top:794px;color:#1890ff;">清空</div>
<div class="a" style="left:268px;top:839px;width:1584px;height:46px;background:#fafafa;border-radius:4px 4px 0 0"></div>
<div class="a" style="left:268px;top:839px;width:1584px;height:125px;border:1px solid #e8e8e8;border-bottom:0;border-radius:4px 4px 0 0"></div>
<div class="a" style="left:268px;top:885px;width:1584px;height:1px;background:#e8e8e8"></div>
<div class="a" style="left:268px;top:931px;width:1584px;height:1px;background:#e8e8e8"></div>
<div class="a" style="left:328px;top:839px;width:1px;height:115px;background:#e8e8e8"></div>
<div class="a" style="left:421px;top:839px;width:1px;height:115px;background:#e8e8e8"></div>
<div class="a" style="left:644px;top:839px;width:1px;height:115px;background:#e8e8e8"></div>
<div class="a" style="left:717px;top:839px;width:1px;height:115px;background:#e8e8e8"></div>
<div class="a" style="left:1258px;top:839px;width:1px;height:115px;background:#e8e8e8"></div>
<div class="a" style="left:1485px;top:839px;width:1px;height:115px;background:#e8e8e8"></div>
<div class="a" style="left:1614px;top:839px;width:1px;height:115px;background:#e8e8e8"></div>
<div class="a" style="left:1659px;top:839px;width:1px;height:115px;background:#e8e8e8"></div>
<div class="a" style="left:1694px;top:840px;width:10px;height:115px;background:linear-gradient(to right,rgba(0,0,0,0),rgba(0,0,0,.07))"></div>
<div class="a" style="left:1704px;top:840px;width:1px;height:115px;background:#e8e8e8"></div>
<div class="a" style="left:291px;top:855px;width:16px;height:16px;border:1px solid #d9d9d9;border-radius:2px;background:#fff"></div>
<div class="a" style="left:291px;top:901px;width:16px;height:16px;border:1px solid #d9d9d9;border-radius:2px;background:#fff"></div>
<div class="a" style="left:291px;top:947px;width:16px;height:16px;border:1px solid #d9d9d9;border-radius:2px;background:#fff"></div>
<div class="t " style="left:337px;top:853px;color:rgba(0,0,0,.85);">项目序号</div>
<svg style="left:403px;top:856px;" width="8" height="12" viewBox="0 0 8 12"><path d="M4 0.5 L7.5 4.8 L0.5 4.8Z M4 11.5 L7.5 7.2 L0.5 7.2Z" fill="#bfbfbf"/></svg>
<div class="t " style="left:421px;width:223px;top:853px;text-align:center;color:rgba(0,0,0,.85);">物资名称</div>
<div class="t " style="left:644px;width:73px;top:853px;text-align:center;color:rgba(0,0,0,.85);">物资类别</div>
<div class="t " style="left:717px;width:541px;top:853px;text-align:center;color:rgba(0,0,0,.85);">规格和型号</div>
<div class="t " style="left:1258px;width:227px;top:853px;text-align:center;color:rgba(0,0,0,.85);">其它描述</div>
<div class="t " style="left:1485px;width:129px;top:853px;text-align:center;color:rgba(0,0,0,.85);">推荐制造厂商名称</div>
<div class="t " style="left:1614px;width:45px;top:853px;text-align:center;color:rgba(0,0,0,.85);">数量</div>
<div class="t " style="left:1659px;width:45px;top:853px;text-align:center;color:rgba(0,0,0,.85);">单位</div>
<div class="t " style="left:1704px;width:148px;top:853px;text-align:center;color:rgba(0,0,0,.85);">操作</div>
<div class="t " style="left:421px;width:223px;top:899px;text-align:center;"><span class="l">fisher</span>定位器费 希尔分体式定位器</div>
<div class="t " style="left:717px;width:541px;top:899px;text-align:center;">费舍尔定位器<span class="l">DVC6205</span>；反馈模块<span class="l">DVC6215</span> 放大器；（中文说明书一套）带现场服务</div>
<div class="t " style="left:1258px;width:227px;top:899px;text-align:center;overflow:hidden">用于<span class="l">#1</span>、<span class="l">#2</span>燃机<span class="l">EFM</span>阀门</div>
<div class="t " style="left:1485px;width:129px;top:899px;text-align:center;">品牌：<span class="l">FISHER</span></div>
<div class="t " style="left:1614px;width:45px;top:899px;text-align:center;"><span class="l">4</span></div>
<div class="t " style="left:1659px;width:45px;top:899px;text-align:center;">套</div>
<div class="t " style="left:1741px;top:899px;color:#1890ff;">编辑</div>
<div class="a" style="left:1777px;top:902px;width:1px;height:14px;background:#e8e8e8"></div>
<div class="t " style="left:1786px;top:899px;color:#1890ff;">删除</div>
<div class="t " style="left:421px;width:223px;top:945px;text-align:center;">光电转换器</div>
<div class="t " style="left:717px;width:541px;top:945px;text-align:center;"><span class="l">EL100T</span></div>
<div class="t " style="left:1258px;width:227px;top:945px;text-align:center;overflow:hidden">用于天然气调压站光电转换器更换</div>
<div class="t " style="left:1485px;width:129px;top:945px;text-align:center;">品牌：<span class="l">FISHER</span></div>
<div class="t " style="left:1614px;width:45px;top:945px;text-align:center;"><span class="l">2</span></div>
<div class="t " style="left:1659px;width:45px;top:945px;text-align:center;">个</div>
<div class="t " style="left:1741px;top:945px;color:#1890ff;">编辑</div>
<div class="a" style="left:1777px;top:948px;width:1px;height:14px;background:#e8e8e8"></div>
<div class="t " style="left:1786px;top:945px;color:#1890ff;">删除</div>
<div class="a" style="left:0px;top:58px;width:208px;height:896px;background:#fff;box-shadow:2px 0 6px rgba(0,21,41,.10)"></div>
<svg style="left:24px;top:76px;" width="15" height="14" viewBox="0 0 15 14"><path d="M0.6 7.4 L7.5 0.8 L14.4 7.4" fill="none" stroke="#595959" stroke-width="1.2" stroke-linejoin="round" stroke-linecap="round"/><path d="M2.6 5.8 L2.6 13.2 L6 13.2 L6 9.4 L9 9.4 L9 13.2 L12.4 13.2 L12.4 5.8" fill="none" stroke="#595959" stroke-width="1.2" stroke-linejoin="round"/></svg>
<div class="t " style="left:48px;top:73px;color:#545454;">首页</div>
<svg style="left:24px;top:124px;" width="14" height="14" viewBox="0 0 14 14"><rect x="1" y="1.5" width="8" height="1.2" fill="#595959" opacity=".75"/><rect x="1" y="5" width="12" height="1.1" fill="#595959"/><rect x="1" y="8.2" width="8" height="1.1" fill="#595959"/><rect x="1" y="11.5" width="12" height="1.2" fill="#595959" opacity=".75"/></svg>
<div class="t " style="left:48px;top:121px;color:#545454;">基础数据</div>
<svg style="left:181px;top:127.5px;" width="8" height="5" viewBox="0 0 8 5"><path d="M0.8 0.8 L4.0 4.2 L7.2 0.8" fill="none" stroke="#595959" stroke-width="1.7"/></svg>
<svg style="left:24px;top:172px;" width="14" height="14" viewBox="0 0 14 14"><path d="M7 13.2 L1 13.2 L1 0.8 L11 0.8 L11 6" fill="none" stroke="#1890ff" stroke-width="1.2"/><path d="M3 4 L8.5 4 M3 6.5 L5.5 6.5" stroke="#1890ff" stroke-width="1.1"/><circle cx="10.2" cy="9" r="1.6" fill="none" stroke="#1890ff" stroke-width="1.1"/><path d="M7.5 13.4 L7.5 11.8 L13 11.8 L13 13.4 Z" fill="none" stroke="#1890ff" stroke-width="1.1"/></svg>
<div class="t " style="left:48px;top:169px;color:#1890ff;">项目管理</div>
<svg style="left:181px;top:175.5px;" width="8" height="5" viewBox="0 0 8 5"><path d="M0.8 4.2 L4.0 0.8 L7.2 4.2" fill="none" stroke="#595959" stroke-width="1.7"/></svg>
<div class="a" style="left:0px;top:206px;width:205px;height:40px;background:#e6f7ff"></div>
<div class="a" style="left:205px;top:206px;width:3px;height:40px;background:#1890ff"></div>
<svg style="left:48px;top:220px;" width="14" height="14" viewBox="0 0 14 14"><path d="M2.9 1.4 L13 1.4 L13 12.6 L6.8 12.6" fill="none" stroke="#1890ff" stroke-width="1.1"/><path d="M3 1.4 L3 5" stroke="#1890ff" stroke-width="1.1"/><path d="M6.8 1.4 C7 0.2 9.6 0.2 9.8 1.4 Z" fill="#1890ff"/><rect x="0.9" y="5.2" width="5.9" height="7.4" fill="#e6f7ff" stroke="#1890ff" stroke-width="1.1"/><path d="M0.9 8.8 L6.8 8.8" stroke="#1890ff" stroke-width="1.1"/><circle cx="9.4" cy="6.5" r="0.6" fill="#1890ff"/><path d="M11.3 5.6 L11.8 6.9 L10.8 6.9Z" fill="#1890ff"/><circle cx="10.4" cy="9.8" r="1.2" fill="none" stroke="#1890ff" stroke-width="1"/></svg>
<div class="t " style="left:72px;top:217px;color:#1890ff;">招投标管理</div>
<svg style="left:48px;top:268px;" width="14" height="14" viewBox="0 0 14 14"><path d="M0.7 2.7 L13.3 2.7 L13.3 12.3 L0.7 12.3 Z" fill="none" stroke="#595959" stroke-width="1.1"/><path d="M0.7 12 L13.3 12" stroke="#595959" stroke-width="1" opacity=".6"/><path d="M3.5 1 L3.5 4.4 M6.8 1.2 L6.8 4.2 M10.4 1 L10.4 4.4" stroke="#595959" stroke-width="1.1"/><path d="M2.4 7.3 L5.7 7.3 M2.4 9.4 L5.7 9.4" stroke="#595959" stroke-width="1"/><path d="M7.3 7.4 L8.5 9.6 L10.9 6.3" fill="none" stroke="#595959" stroke-width="1.1"/></svg>
<div class="t " style="left:72px;top:265px;color:#545454;">销售合同</div>
<svg style="left:48px;top:316px;" width="14" height="14" viewBox="0 0 14 14"><circle cx="5.6" cy="5.6" r="4.5" fill="none" stroke="#595959" stroke-width="1.3"/><path d="M9 9 L13 13" stroke="#595959" stroke-width="1.4" stroke-linecap="round"/></svg>
<div class="t " style="left:72px;top:313px;color:#545454;">询价单</div>
<svg style="left:48px;top:364px;" width="14" height="14" viewBox="0 0 14 14"><path d="M0.7 2.7 L13.3 2.7 L13.3 12.3 L0.7 12.3 Z" fill="none" stroke="#595959" stroke-width="1.1"/><path d="M0.7 12 L13.3 12" stroke="#595959" stroke-width="1" opacity=".6"/><path d="M3.5 1 L3.5 4.4 M6.8 1.2 L6.8 4.2 M10.4 1 L10.4 4.4" stroke="#595959" stroke-width="1.1"/><path d="M2.4 7.3 L5.7 7.3 M2.4 9.4 L5.7 9.4" stroke="#595959" stroke-width="1"/><path d="M7.3 7.4 L8.5 9.6 L10.9 6.3" fill="none" stroke="#595959" stroke-width="1.1"/></svg>
<div class="t " style="left:72px;top:361px;color:#545454;">采购合同</div>
<svg style="left:48px;top:412px;" width="14" height="14" viewBox="0 0 14 14"><path d="M0.8 2.4 L3.3 2.4 L4.8 10" fill="none" stroke="#595959" stroke-width="1.1" stroke-linejoin="round"/><path d="M3.6 3.2 L13 3.2 L11.6 9 L4.6 9" fill="none" stroke="#595959" stroke-width="1.1" stroke-linejoin="round"/><path d="M3.6 10.6 L13 10.6" stroke="#595959" stroke-width="1" opacity=".7"/><circle cx="5.4" cy="12.3" r="1.1" fill="none" stroke="#595959" stroke-width="1"/><circle cx="10" cy="12.3" r="1.1" fill="#595959"/></svg>
<div class="t " style="left:72px;top:409px;color:#545454;">送货单</div>
<svg style="left:24px;top:460px;" width="14" height="14" viewBox="0 0 14 14"><path d="M3.6 11.5 C1.6 11.5 0.6 10.2 0.6 8.8 C0.6 7.3 1.8 6.1 3.2 6.1 C3.8 3.8 5.3 2.6 7.2 2.6 C9.3 2.6 10.9 4.1 11.2 6.1 C12.5 6.3 13.4 7.4 13.4 8.8 C13.4 10.3 12.3 11.5 10.5 11.5 Z" fill="none" stroke="#595959" stroke-width="1.2"/></svg>
<div class="t " style="left:48px;top:457px;color:#545454;">系统设置</div>
<svg style="left:181px;top:463.5px;" width="8" height="5" viewBox="0 0 8 5"><path d="M0.8 0.8 L4.0 4.2 L7.2 0.8" fill="none" stroke="#595959" stroke-width="1.7"/></svg>
<svg style="left:24px;top:508px;" width="14" height="14" viewBox="0 0 14 14"><path d="M2 5.9 L9.9 5.9 L9.9 10.6 C9.9 12.8 8.2 14.2 6 14.2 C3.8 14.2 2 12.8 2 10.6 Z" fill="none" stroke="#595959" stroke-width="1.1"/><path d="M9.9 7 L12.8 7 L12.8 10.8 L9.9 10.8" fill="none" stroke="#595959" stroke-width="1.1"/><path d="M3.4 1 L3.4 4.6 M5.9 1 L5.9 4.6 M8.4 1 L8.4 4.6" stroke="#595959" stroke-width="1" opacity=".8"/></svg>
<div class="t " style="left:48px;top:505px;color:#545454;">订餐管理</div>
<svg style="left:181px;top:511.5px;" width="8" height="5" viewBox="0 0 8 5"><path d="M0.8 0.8 L4.0 4.2 L7.2 0.8" fill="none" stroke="#595959" stroke-width="1.7"/></svg>
<svg style="left:24px;top:556px;" width="14" height="14" viewBox="0 0 14 14"><path d="M1 1 L1 12.6 L13 12.6" fill="none" stroke="#595959" stroke-width="1.1"/><path d="M2.6 11.6 L2.6 9.2 L5 6.8 L7.6 8.8 L10.6 5.4 L12.4 7.8 L12.4 11.6 Z" fill="#595959" opacity=".9"/></svg>
<div class="t " style="left:48px;top:553px;color:#545454;">报表设计</div>
<svg style="left:181px;top:559.5px;" width="8" height="5" viewBox="0 0 8 5"><path d="M0.8 0.8 L4.0 4.2 L7.2 0.8" fill="none" stroke="#595959" stroke-width="1.7"/></svg>
<svg style="left:24px;top:604px;" width="14" height="14" viewBox="0 0 14 14"><path d="M1 1 L1 12.6 L13 12.6" fill="none" stroke="#595959" stroke-width="1.1"/><path d="M4 9 L4 11.6 M6.6 6 L6.6 11.6 M9.2 7.5 L9.2 11.6 M11.8 5 L11.8 11.6" stroke="#595959" stroke-width="1.1"/></svg>
<div class="t " style="left:48px;top:601px;color:#545454;">查询报表</div>
<svg style="left:181px;top:607.5px;" width="8" height="5" viewBox="0 0 8 5"><path d="M0.8 0.8 L4.0 4.2 L7.2 0.8" fill="none" stroke="#595959" stroke-width="1.7"/></svg>
<svg style="left:24px;top:652px;" width="14" height="14" viewBox="0 0 14 14"><path d="M2.4 4.6 L3.4 0.6 L10.6 0.6 L11.6 4.6" fill="none" stroke="#595959" stroke-width="1.1" stroke-linejoin="round"/><path d="M1.3 4.6 L12.7 4.6 L12.7 11 L1.3 11 Z" fill="none" stroke="#595959" stroke-width="1.1"/><path d="M2.5 5.3 L11.5 5.3" stroke="#595959" stroke-width="1" opacity=".5"/><path d="M0 4.3 L1.8 4.3 M12.2 4.3 L14 4.3" stroke="#595959" stroke-width="1.1"/><path d="M1.3 11 L1.3 12 L3 12 M12.7 11 L12.7 12 L11 12" stroke="#595959" stroke-width="1.1"/><path d="M5.2 7.6 L5.2 8.6 L8.8 8.6 L8.8 7.6" fill="none" stroke="#595959" stroke-width="1"/><path d="M3.3 6.5 L3.3 7.3 M10.7 6.5 L10.7 7.3" stroke="#595959" stroke-width="0.8" opacity=".6"/></svg>
<div class="t " style="left:48px;top:649px;color:#545454;">车辆管理</div>
<svg style="left:181px;top:655.5px;" width="8" height="5" viewBox="0 0 8 5"><path d="M0.8 0.8 L4.0 4.2 L7.2 0.8" fill="none" stroke="#595959" stroke-width="1.7"/></svg>
<svg style="left:24px;top:700px;" width="14" height="14" viewBox="0 0 14 14"><polygon points="4.97,2.43 5.61,0.45 8.39,0.45 9.03,2.43 9.94,2.95 11.98,2.52 13.37,4.93 11.97,6.48 11.97,7.52 13.37,9.07 11.98,11.48 9.94,11.05 9.03,11.57 8.39,13.55 5.61,13.55 4.97,11.57 4.06,11.05 2.02,11.48 0.63,9.07 2.03,7.52 2.03,6.48 0.63,4.93 2.02,2.52 4.06,2.95" fill="none" stroke="#595959" stroke-width="1.2" stroke-linejoin="round"/><circle cx="7" cy="7" r="2.6" fill="none" stroke="#595959" stroke-width="1.1"/></svg>
<div class="t " style="left:48px;top:697px;color:#545454;">系统管理</div>
<svg style="left:181px;top:703.5px;" width="8" height="5" viewBox="0 0 8 5"><path d="M0.8 0.8 L4.0 4.2 L7.2 0.8" fill="none" stroke="#595959" stroke-width="1.7"/></svg>
<svg style="left:24px;top:748px;" width="14" height="14" viewBox="0 0 14 14"><path d="M3.3 12.6 A6.3 6.3 0 1 1 10.7 12.6 Z" fill="none" stroke="#595959" stroke-width="1.2" stroke-linejoin="round"/><path d="M7 8 L9.6 4.8" stroke="#595959" stroke-width="1.2"/><circle cx="7" cy="8" r="0.9" fill="#595959"/><path d="M2.6 8 L3.6 8 M10.4 8 L11.4 8 M6.5 3.6 L7.5 3.6 M3.8 4.9 L4.6 5.5 M10.2 4.9 L9.4 5.5" stroke="#595959" stroke-width="1"/></svg>
<div class="t " style="left:48px;top:745px;color:#545454;">系统监控</div>
<svg style="left:181px;top:751.5px;" width="8" height="5" viewBox="0 0 8 5"><path d="M0.8 0.8 L4.0 4.2 L7.2 0.8" fill="none" stroke="#595959" stroke-width="1.7"/></svg>
<svg style="left:24px;top:796px;" width="14" height="14" viewBox="0 0 14 14"><path d="M7 0.6 C10.6 0.6 13.4 3.4 13.4 7 C13.4 10.6 10.6 13.4 7 13.4 C6 13.4 5 13.1 4.2 12.7 L1.2 12.7 L1.2 9.8 C0.8 9 0.6 8 0.6 7 C0.6 3.4 3.4 0.6 7 0.6 Z" fill="none" stroke="#595959" stroke-width="1.1" stroke-linejoin="round"/><rect x="3.3" y="6.2" width="1.6" height="1.6" fill="#595959" opacity=".8"/><rect x="6.2" y="6.2" width="1.6" height="1.6" fill="#595959" opacity=".8"/><rect x="9.1" y="6.2" width="1.6" height="1.6" fill="#595959" opacity=".8"/></svg>
<div class="t " style="left:48px;top:793px;color:#545454;">消息中心</div>
<svg style="left:181px;top:799.5px;" width="8" height="5" viewBox="0 0 8 5"><path d="M0.8 0.8 L4.0 4.2 L7.2 0.8" fill="none" stroke="#595959" stroke-width="1.7"/></svg>
<svg style="left:24px;top:844px;" width="14" height="14" viewBox="0 0 14 14"><path d="M7 1.2 L13.4 12.6 L0.6 12.6 Z" fill="none" stroke="#595959" stroke-width="1.2" stroke-linejoin="round"/><path d="M7 5.2 L7 9" stroke="#595959" stroke-width="1.2"/><circle cx="7" cy="10.6" r="0.75" fill="#595959"/></svg>
<div class="t " style="left:48px;top:841px;color:#545454;">异常页</div>
<svg style="left:181px;top:847.5px;" width="8" height="5" viewBox="0 0 8 5"><path d="M0.8 0.8 L4.0 4.2 L7.2 0.8" fill="none" stroke="#595959" stroke-width="1.7"/></svg>
<svg style="left:24px;top:892px;" width="14" height="14" viewBox="0 0 14 14"><rect x="4.5" y="0.5" width="3" height="11.5" fill="#aaa"/><rect x="0.5" y="4.5" width="11.5" height="3" fill="#aaa"/><path d="M1 1 L5.2 1 L5.2 5.2 L1 5.2 Z M7.8 1 L12 1 L12 5.2 L7.8 5.2 Z M1 7.8 L5.2 7.8 L5.2 12 L1 12 Z" fill="#fff" stroke="#595959" stroke-width="1.1"/><rect x="2.5" y="2.5" width="1.2" height="1.2" fill="#595959"/><rect x="9.3" y="2.5" width="1.2" height="1.2" fill="#595959"/><rect x="2.5" y="9.3" width="1.2" height="1.2" fill="#595959"/><path d="M7.6 8.2 L9.6 8.2 L9.6 10.3 L11.9 10.3 L11.9 7.3" fill="none" stroke="#595959" stroke-width="1.1"/><rect x="9" y="11.3" width="1.1" height="1.1" fill="#595959"/><rect x="11.2" y="11.3" width="1.1" height="1.1" fill="#595959"/></svg>
<div class="t " style="left:48px;top:889px;color:#545454;">常见案例</div>
<svg style="left:181px;top:895.5px;" width="8" height="5" viewBox="0 0 8 5"><path d="M0.8 0.8 L4.0 4.2 L7.2 0.8" fill="none" stroke="#595959" stroke-width="1.7"/></svg>
<svg style="left:24px;top:940px;" width="14" height="14" viewBox="0 0 14 14"><path d="M1.5 0.8 L8.5 0.8 L12.5 4.8 L12.5 13.2 L1.5 13.2 Z M8.5 0.8 L8.5 4.8 L12.5 4.8" fill="none" stroke="#595959" stroke-width="1.2" stroke-linejoin="round"/><path d="M5.5 8 C5.5 6.8 6.3 6.3 7 6.3 C7.8 6.3 8.5 6.8 8.5 7.6 C8.5 8.6 7 8.8 7 10" fill="none" stroke="#595959" stroke-width="1"/></svg>
<div class="t " style="left:48px;top:937px;color:#545454;">系统帮助</div>
<svg style="left:181px;top:943.5px;" width="8" height="5" viewBox="0 0 8 5"><path d="M0.8 0.8 L4.0 4.2 L7.2 0.8" fill="none" stroke="#595959" stroke-width="1.7"/></svg>
<div class="a" style="left:208px;top:58px;width:1704px;height:52px;background:#fff"></div>
<div class="a" style="left:208px;top:58px;width:1px;height:52px;background:#d9d9d9"></div>
<div class="a" style="left:208px;top:110px;width:1704px;height:1px;background:#d9d9d9"></div>
<div class="t " style="left:253px;top:73px;color:#545454;">首页</div>
<div class="t " style="left:339px;top:73px;color:#1890ff;">招投标管理</div>
<div class="a" style="left:315px;top:101px;width:118px;height:2px;background:#1890ff"></div>
<div class="a" style="left:0px;top:0px;width:1912px;height:58px;background:#1890ff;box-shadow:0 1px 4px rgba(0,21,41,.12)"></div>
<svg style="left:22px;top:14px;" width="38" height="34" viewBox="0 0 38 34">
<defs>
<radialGradient id="gy" cx="0.5" cy="0.35" r="0.7"><stop offset="0" stop-color="#fff7b0"/><stop offset="0.55" stop-color="#ffe04a"/><stop offset="0.9" stop-color="#f8c800"/><stop offset="1" stop-color="#f09a10"/></radialGradient>
<linearGradient id="gg" x1="0" y1="0" x2="1" y2="1"><stop offset="0" stop-color="#3fa83a"/><stop offset="0.5" stop-color="#72c035"/><stop offset="1" stop-color="#1f9a3c"/></linearGradient>
<linearGradient id="gb" x1="0" y1="0" x2="1" y2="0.6"><stop offset="0" stop-color="#1d5fb8"/><stop offset="0.35" stop-color="#1570c8"/><stop offset="1" stop-color="#1590e0"/></linearGradient>
</defs>
<circle cx="17.6" cy="17.5" r="14.3" fill="url(#gb)"/>
<path d="M15 3.4 C11 5.5 9 10.5 9.2 16 C9.5 22 13 26.5 20 28 C25.5 29 30.5 29.2 34 32 C35.2 28 34 24.5 31.5 22.5 C27 21 20.5 21.5 16.5 18.5 C13.5 16 12.8 12 13.2 9 C13.6 6.5 14.8 4.8 16.5 3.5 C16 3.4 15.5 3.4 15 3.4 Z" fill="url(#gg)"/>
<path d="M13 12 C12.5 6.5 16.5 3.6 22 3.6 C28 3.6 32 8 32 13 C32 16.5 32 19.5 31.5 22.3 C27 20.8 20 21.2 16.8 18.6 C14.3 16.5 13.2 14.5 13 12 Z" fill="url(#gy)"/>
<rect x="19.2" y="8.6" width="4.2" height="4.2" transform="rotate(45 21.3 10.7)" fill="#1f6cc0"/>
</svg>
<div class="t w" style="left:65px;top:21px;font-size:17px;font-weight:bold;letter-spacing:0;line-height:22px;height:22px">Quick-Start</div>
<svg style="left:227px;top:18px;" width="20" height="18" viewBox="0 0 20 18">
<rect x="0" y="0" width="20" height="2" fill="#fff"/>
<rect x="7.5" y="5.3" width="12.5" height="1.8" fill="#fff"/>
<rect x="7.5" y="10.5" width="12.5" height="1.8" fill="#fff"/>
<rect x="0" y="15.8" width="20" height="2" fill="#fff"/>
<path d="M0 8.8 L5 5.8 L5 11.8Z" fill="#fff"/>
</svg>
<div class="t " style="left:266px;top:21px;color:#fff;-webkit-text-stroke:.2px #fff">欢迎进入 项目管理平台</div>
<svg style="left:1516px;top:23px;" width="14" height="14" viewBox="0 0 14 14"><circle cx="5.6" cy="5.6" r="4.8" fill="none" stroke="#fff" stroke-width="1.3"/><path d="M9 9 L13 13" stroke="#fff" stroke-width="1.4" stroke-linecap="round"/></svg>
<svg style="left:1557px;top:23px;" width="15" height="15" viewBox="0 0 15 15"><circle cx="7.5" cy="7.5" r="6.6" fill="none" stroke="#fff" stroke-width="1.2"/><path d="M5.3 5.8 C5.3 4.3 6.3 3.6 7.5 3.6 C8.8 3.6 9.7 4.4 9.7 5.6 C9.7 6.9 7.6 7.2 7.6 8.9" fill="none" stroke="#fff" stroke-width="1.2"/><circle cx="7.6" cy="11" r="0.8" fill="#fff"/></svg>
<svg style="left:1606px;top:22px;" width="12" height="16" viewBox="0 0 12 16"><path d="M6 2 C3.2 2 1.6 4.2 1.6 6.8 L1.6 12.6 L0.4 13.6 L11.6 13.6 L10.4 12.6 L10.4 6.8 C10.4 4.2 8.8 2 6 2Z" fill="none" stroke="#fff" stroke-width="1.2" stroke-linejoin="round"/><path d="M6 0.4 L6 2" stroke="#fff" stroke-width="1.6" stroke-linecap="round"/><path d="M4.3 14 C4.5 15.6 7.5 15.6 7.7 14" fill="none" stroke="#fff" stroke-width="1.1"/></svg>
<div class="a" style="left:1652px;top:20px;width:24px;height:24px;background:#e1edfb;border-radius:50%"></div>
<div class="t " style="left:1686px;top:22px;color:#fff;-webkit-text-stroke:.2px #fff">欢迎您，朱迎添</div>
<svg style="left:1811px;top:23px;" width="15" height="15" viewBox="0 0 15 15"><path d="M13.1 2.9 A6.6 6.6 0 1 0 13.1 11.1" fill="none" stroke="#fff" stroke-width="1.2"/><path d="M7.4 7 L13.4 7" stroke="#fff" stroke-width="1.1" opacity=".8"/><circle cx="13.6" cy="7" r="1.1" fill="#fff"/></svg>
<div class="t " style="left:1830px;top:22px;color:#fff;-webkit-text-stroke:.2px #fff">退出登录</div>
<div class="a" style="left:1912px;top:0px;width:8px;height:954px;background:#f5f5f5"></div>
<div class="a" style="left:1912px;top:0px;width:8px;height:769px;background:#cccccc;border-radius:0 0 3px 3px"></div>
<div class="a" style="left:14px;top:949px;width:26px;height:26px;border-radius:50%;border:1.5px solid #0b4f8a;background:radial-gradient(circle at 50% 20%,#eef3f7,#a9bccd)"></div></body></html>
